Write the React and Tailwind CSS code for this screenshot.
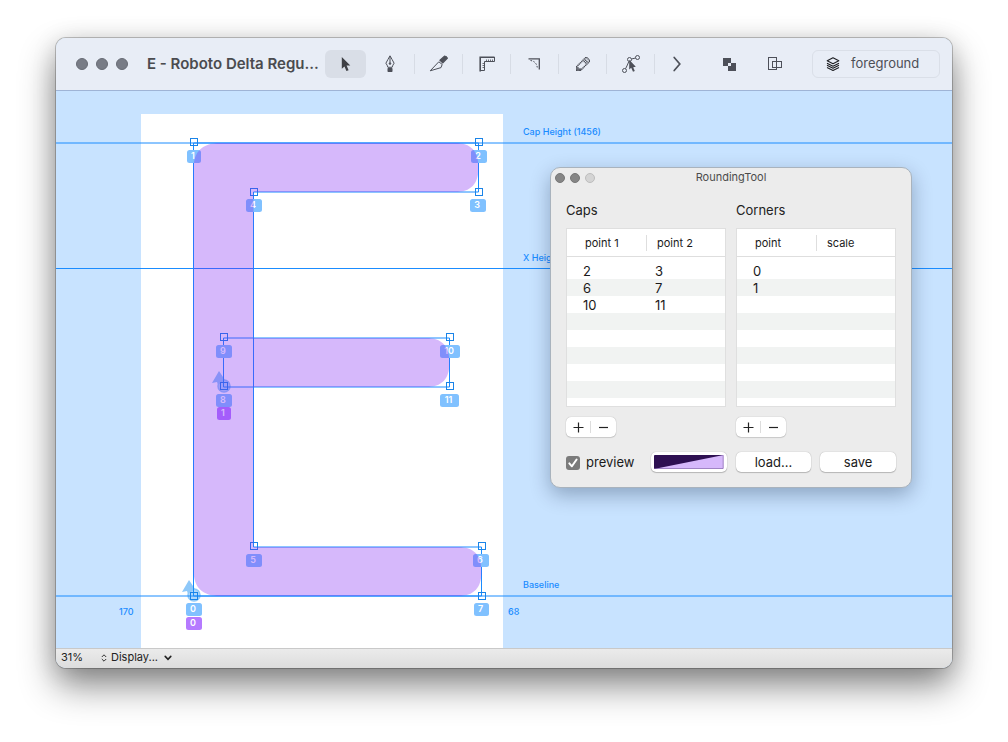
import React from "react";

const FONT = "font-['Inter','Liberation_Sans',sans-serif]";

const ICON = "#4d5059";

function ArrowIcon() {
  return (
    <svg width="12" height="16" viewBox="0 0 12 16">
      <path d="M1.8 1 L1.8 12.8 L4.5 10.4 L6.4 15.1 L8.6 14.2 L6.6 9.6 L10.3 9.4 Z" fill="#3f4045" />
    </svg>
  );
}

function PenIcon() {
  return (
    <svg width="12" height="18" viewBox="0 0 12 18" fill="none" stroke={ICON}>
      <path d="M6 0.8 C4.8 3.6 3 5.4 1.9 8.2 C2.8 9.6 3.6 10.8 3.9 12.3 H8.1 C8.4 10.8 9.2 9.6 10.1 8.2 C9 5.4 7.2 3.6 6 0.8 Z" />
      <path d="M6 1.5 V8" />
      <circle cx="6" cy="8.6" r="0.8" fill={ICON} />
      <rect x="3.5" y="13" width="5" height="4" rx="0.8" fill={ICON} stroke="none" />
    </svg>
  );
}

function KnifeIcon() {
  return (
    <svg width="20" height="18" viewBox="0 0 20 18" fill="none" stroke={ICON}>
      <path d="M1.2 15.8 L9.8 6.8 L13.2 9.4 L12 12.6 Z" strokeLinejoin="round" />
      <path d="M11 5.2 L15.6 1 Q17.6 1 18.4 3.2 L13.8 7.8 Z" fill={ICON} strokeWidth="1.2" />
    </svg>
  );
}

function RulerIcon() {
  return (
    <svg width="16" height="16" viewBox="0 0 16 16" fill="none" stroke={ICON}>
      <path d="M15.5 1.2 H1.2 V15.5" strokeWidth="1.6" />
      <path d="M15.5 1 V5.5 H5.5 V14.5 H1" />
      <path d="M7.5 3.5 V5.5 M9.5 3.5 V5.5 M11.5 3.5 V5.5 M13.5 3.5 V5.5 M3.5 7.5 H5.5 M3.5 9.5 H5.5 M3.5 11.5 H5.5" opacity="0.8" />
    </svg>
  );
}

function MeasureIcon() {
  return (
    <svg width="14" height="14" viewBox="0 0 14 14" fill="none" stroke={ICON}>
      <path d="M0.5 1.8 H11.3 V12.5" strokeWidth="1.3" />
      <path d="M2.5 3.5 C6.5 4 9 6.5 9.4 11.5" strokeDasharray="1.6 1.4" />
    </svg>
  );
}

const PENCIL_CELLS = [
  [7, 0], [8, 0], [6, 1], [9, 1], [5, 2], [7, 2], [10, 2], [4, 3], [8, 3], [10, 3], [3, 4], [6, 3], [7, 4], [9, 4],
  [2, 5], [8, 5], [1, 6], [7, 6], [0, 7], [6, 7], [0, 8], [1, 8], [5, 8], [0, 9], [1, 9], [2, 9], [3, 9], [4, 9],
  [0, 10], [1, 10], [2, 10], [3, 10],
];

function PixelPencilIcon() {
  return (
    <svg width="14" height="14" viewBox="0 0 11 11" fill={ICON}>
      {PENCIL_CELLS.map(([x, y]) => (
        <rect key={`${x}-${y}`} x={x} y={y} width="1.1" height="1.1" />
      ))}
    </svg>
  );
}

function NodeArrowIcon() {
  return (
    <svg width="20" height="20" viewBox="0 0 20 20" fill="none" stroke={ICON}>
      <circle cx="3.5" cy="16.5" r="2" />
      <circle cx="8.5" cy="5.5" r="2" />
      <circle cx="16.5" cy="3.5" r="2" />
      <path d="M4.6 14.6 Q6.5 11 7.8 7.6 M10.5 5 L14.5 4" />
      <path d="M8.2 5.8 V15.4 L10.2 13.8 L12 17.8 L13.8 17 L12.2 13.2 L14.8 12.8 Z" fill={ICON} stroke="none" />
    </svg>
  );
}

function ChevronIcon() {
  return (
    <svg width="10" height="16" viewBox="0 0 10 16" fill="none" stroke={ICON} strokeWidth="1.7" strokeLinecap="round">
      <path d="M2.2 1.5 L7.8 8 L2.2 14.5" />
    </svg>
  );
}

function UniteIcon() {
  return (
    <svg width="13" height="13" viewBox="0 0 13 13" fill={ICON}>
      <path d="M0 0 H8 V5 H5 V8 H0 Z" />
      <path d="M13 13 H5 V8 H8 V5 H13 Z" />
      <rect x="5" y="5" width="3" height="3" fill="#e8edf6" />
    </svg>
  );
}

function OverlapIcon() {
  return (
    <svg width="14" height="14" viewBox="0 0 14 14" fill="none" stroke={ICON}>
      <rect x="0.5" y="0.5" width="8" height="12" />
      <rect x="4.5" y="4.5" width="9" height="6" />
    </svg>
  );
}

function LayersIcon() {
  return (
    <svg width="14" height="14" viewBox="0 0 14 14" fill="none" stroke="#1f2024" strokeWidth="1.1" strokeLinejoin="round">
      <path d="M7 0.8 L12.8 3.8 L7 6.8 L1.2 3.8 Z" />
      <path d="M1 6.2 L7 9.2 L13 6.2 M1 8.3 L7 11.3 L13 8.3 M1 10.4 L7 13.4 L13 10.4" />
    </svg>
  );
}

const TOOLS = [
  ["Pen", PenIcon],
  ["Knife", KnifeIcon],
  ["Ruler", RulerIcon],
  ["Measure", MeasureIcon],
  ["Pixel", PixelPencilIcon],
  ["Edit nodes", NodeArrowIcon],
];

function Toolbar() {
  return (
    <header className="flex h-[53px] items-center border-b border-[#9fb4d6] bg-[#e8edf6] pl-5 pr-3">
      <div className="flex gap-2">
        {["Close", "Minimize", "Zoom"].map((name) => (
          <button key={name} aria-label={name} className="size-3 rounded-full border border-[#686c75] bg-[#787c86]" />
        ))}
      </div>
      <h1 className="ml-[19px] w-[178px] whitespace-nowrap text-[15px] font-semibold text-[#4a4b4f]">E - Roboto Delta Regu...</h1>
      <button aria-label="Select" className="flex h-7 w-[41px] items-center justify-center rounded-md bg-[#d9dee7]">
        <ArrowIcon />
      </button>
      {TOOLS.map(([name, Icon], i) => (
        <button
          key={name}
          aria-label={name}
          className={`flex h-5 items-center justify-center border-r border-[#d7dce5] ${i === 0 ? "w-[49px]" : "w-12"}`}
        >
          <Icon />
        </button>
      ))}
      <button aria-label="More tools" className="flex h-7 w-11 items-center justify-center">
        <ChevronIcon />
      </button>
      <div className="ml-auto flex items-center">
        <button aria-label="Unite" className="flex h-7 w-[46px] items-center justify-center">
          <UniteIcon />
        </button>
        <button aria-label="Overlap" className="flex h-7 w-[46px] items-center justify-center">
          <OverlapIcon />
        </button>
        <button className="ml-[14px] flex h-7 w-32 items-center gap-[11px] rounded-md border border-[#dadfe8] pl-[13px] text-[13px] text-[#4d4f57]">
          <LayersIcon />
          foreground
        </button>
      </div>
    </header>
  );
}

const MARKERS = [
  [194, 142], [479, 142], [479, 192], [254, 192], [224, 337], [450, 337],
  [224, 386], [450, 386], [254, 546], [482, 546], [194, 596], [482, 596],
];

const BADGES = [
  ["1", 187, 150, 14], ["2", 471, 150, 16], ["3", 470, 199, 16], ["4", 246, 199, 16],
  ["9", 216, 345, 16], ["10", 440, 345, 20], ["8", 216, 394, 16], ["11", 440, 394, 19],
  ["5", 246, 554, 16], ["6", 473, 554, 16], ["7", 474, 603, 15], ["0", 186, 603, 16],
];

const CORNER_BADGES = [["1", 217, 407, 14], ["0", 186, 617, 16]];

function Badge({ label, x, y, width, fill }) {
  return (
    <g>
      <rect x={x} y={y} width={width} height="13" rx="2.5" fill={fill} />
      <text x={x + width / 2 - 1} y={y + 9} textAnchor="middle" fontSize="9" fontWeight="600" fill="#ffffff">
        {label}
      </text>
    </g>
  );
}

function StartPoint({ x, y }) {
  return (
    <g fill="#1f92f5" opacity="0.5">
      <circle cx={x} cy={y - 1} r="6" fillOpacity="0.7" stroke="#1f92f5" strokeWidth="1.5" />
      <path d={`M${x - 5} ${y - 16} L${x + 1} ${y - 7} L${x - 6} ${y - 2} L${x - 7} ${y - 5} L${x - 12} ${y - 4} Z`} />
    </g>
  );
}

function GlyphCanvas() {
  return (
    <svg className={`block h-[557px] w-full ${FONT}`} role="img" aria-label="Outline of the letter E">
      <rect x="85" y="23" width="362" height="534" fill="#ffffff" />
      <g stroke="#1a8cff">
        <line x1="0" x2="100%" y1="52" y2="52" />
        <line x1="0" x2="100%" y1="177.5" y2="177.5" />
        <line x1="0" x2="100%" y1="505" y2="505" />
      </g>
      <g transform="translate(-56 -91)">
        <g fill="none" stroke="#1a8cff">
          <path d="M193.5 143 H478.5 V192 H253.5 V547 H481.5 V596 H193.5 Z" />
          <path d="M223.5 338 H449.5 V387 H223.5 Z" />
        </g>
        <StartPoint x={194} y={596} />
        <StartPoint x={224} y={387} />
        <g fill="none" stroke="#1a84e8">
          {MARKERS.map(([x, y]) => (
            <rect key={`${x}-${y}`} x={x - 3.5} y={y - 3.5} width="7" height="7" />
          ))}
        </g>
        {BADGES.map(([label, x, y, width]) => (
          <Badge key={label} label={label} x={x} y={y} width={width} fill="#80c1ff" />
        ))}
        {CORNER_BADGES.map(([label, x, y, width]) => (
          <Badge key={label} label={label} x={x} y={y} width={width} fill="#b57aff" />
        ))}
        <path
          fill="#8021f3"
          fillOpacity="0.32"
          d="M220 143 H455 C471 143 478.5 151 478.5 167.5 C478.5 184 471 192 455 192 H253.5 V338 H426 C442 338 449.5 346 449.5 362.5 C449.5 379 442 387 426 387 H253.5 V547 H458 C474 547 481.5 555 481.5 571.5 C481.5 588 474 596 458 596 H220 C203 596 193.5 588 193.5 570 V169 C193.5 151 203 143 220 143 Z"
        />
        <g fill="#1a8cff" fontSize="9" fontWeight="500">
          <text x="523" y="135">Cap Height (1456)</text>
          <text x="523" y="261">X Height (1082)</text>
          <text x="523" y="588">Baseline</text>
          <text x="119" y="615">170</text>
          <text x="508" y="615">68</text>
        </g>
      </g>
    </svg>
  );
}

function PointTable({ title, columns, rows }) {
  const blanks = Array.from({ length: 8 - rows.length }, () => ["", ""]);
  return (
    <section className="flex flex-1 flex-col items-start">
      <h2 className="text-[13px] leading-4 text-[#222222]">{title}</h2>
      <div className="mt-[10px] w-full border border-[#dfdfdf] bg-white pb-[8px]">
        <table aria-label={title} className="w-full table-fixed border-separate border-spacing-0 text-left text-[#1a1a1a]">
          <thead>
            <tr className="text-[11px]">
              <th scope="col" className="h-7 w-20 border-b border-[#dedede] p-0 pt-px font-normal">
                <span className="flex h-4 items-center border-r border-[#dedede] pl-[18px]">{columns[0]}</span>
              </th>
              <th scope="col" className="h-7 border-b border-[#dedede] p-0 pl-[10px] pt-px font-normal">
                {columns[1]}
              </th>
            </tr>
          </thead>
          <tbody className="text-[13px] leading-[15px]">
            <tr aria-hidden="true">
              <td colSpan="2" className="h-[5px] p-0" />
            </tr>
            {[...rows, ...blanks].map((row, i) => (
              <tr key={i} className={i % 2 ? "bg-[#f1f3f2]" : "bg-white"}>
                <td className="h-[17px] p-0 pl-4 pt-[2px]">{row[0]}</td>
                <td className="h-[17px] p-0 pl-2 pt-[2px]">{row[1]}</td>
              </tr>
            ))}
          </tbody>
        </table>
      </div>
      <div className="mt-[10px] flex h-5 items-center rounded-[5px] bg-white shadow-[0_0_1px_rgba(0,0,0,0.35),0_1px_1px_rgba(0,0,0,0.12)]">
        <button aria-label={`Add to ${title}`} className="flex h-3 w-[25px] items-center justify-center border-r border-[#dddddd]">
          <svg width="11" height="11" viewBox="0 0 11 11" stroke="#222222" strokeWidth="1.2">
            <path d="M5.5 0.5 V10.5 M0.5 5.5 H10.5" />
          </svg>
        </button>
        <button aria-label={`Remove from ${title}`} className="flex h-3 w-[25px] items-center justify-center">
          <svg width="9" height="11" viewBox="0 0 9 11" stroke="#222222" strokeWidth="1.2">
            <path d="M0 5.5 H9" />
          </svg>
        </button>
      </div>
    </section>
  );
}

const BUTTON =
  "h-5 rounded-[5px] bg-white text-[13px] leading-5 text-[#1a1a1a] shadow-[0_0_1px_rgba(0,0,0,0.35),0_1px_1px_rgba(0,0,0,0.2)]";

function RoundingTool() {
  return (
    <aside className="absolute left-[494px] top-[76px] w-[362px] rounded-[10px] border border-[#a9b3bd] bg-[#ececec] pb-[14px] shadow-[0_7px_20px_rgba(0,20,50,0.3)]">
      <div className="flex h-[19px] items-center pl-1">
        <div className="flex flex-1 gap-[5px]">
          <button aria-label="Close panel" className="size-[10px] rounded-full border border-[#777777] bg-[#868686]" />
          <button aria-label="Minimize panel" className="size-[10px] rounded-full border border-[#777777] bg-[#868686]" />
          <button aria-label="Zoom panel" disabled className="size-[10px] rounded-full border border-[#bdbdbd] bg-[#d4d4d4]" />
        </div>
        <span className="text-[11px] text-[#4c4c4c]">RoundingTool</span>
        <div className="flex-1 pr-1" />
      </div>
      <div className="mt-[15px] flex gap-[10px] px-[15px]">
        <PointTable title="Caps" columns={["point 1", "point 2"]} rows={[["2", "3"], ["6", "7"], ["10", "11"]]} />
        <PointTable title="Corners" columns={["point", "scale"]} rows={[["0", ""], ["1", ""]]} />
      </div>
      <div className="mt-[15px] flex items-center gap-[9px] px-[15px]">
        <label className="flex w-[76px] items-center gap-[6px] pt-px text-[13px] text-[#1a1a1a]">
          <span className="grid">
            <input
              type="checkbox"
              defaultChecked
              className="peer col-start-1 row-start-1 size-[14px] appearance-none rounded-[3px] bg-white checked:bg-[#7b7b7b]"
            />
            <svg className="pointer-events-none invisible col-start-1 row-start-1 peer-checked:visible" width="14" height="14" viewBox="0 0 14 14" fill="none" stroke="#ffffff" strokeWidth="2" strokeLinecap="round" strokeLinejoin="round">
              <path d="M3.3 7.4 L5.9 10.3 L10.6 3.5" />
            </svg>
          </span>
          preview
        </label>
        <div className="grid flex-1 grid-cols-3 gap-[9px]">
          <button aria-label="Preview colour" className={`${BUTTON} p-[3px]`}>
            <svg className="block h-[14px] w-full rounded-[1px]" viewBox="0 0 70 14" preserveAspectRatio="none">
              <rect width="70" height="14" fill="#d6b8fb" />
              <path d="M0 0 H70 L0 14 Z" fill="#2e1052" />
              <path d="M0 13.5 H69.5 V0" fill="none" stroke="#6b4f8e" strokeOpacity="0.5" />
            </svg>
          </button>
          <button className={BUTTON}>load...</button>
          <button className={BUTTON}>save</button>
        </div>
      </div>
    </aside>
  );
}

function StatusBar() {
  return (
    <footer className="flex h-5 items-center border-t border-[#c9c9c9] bg-linear-to-b from-[#ebebeb] to-[#dddddd] pb-[2px] pl-[5px] text-[11px] text-[#222222]">
      <span className="w-10">31%</span>
      <button aria-label="Change zoom" className="flex w-[10px] items-center">
        <svg width="6" height="8" viewBox="0 0 6 8" fill="none" stroke="#333333">
          <path d="M0.8 3 L3 0.8 L5.2 3 M0.8 5 L3 7.2 L5.2 5" />
        </svg>
      </button>
      <button className="flex items-center gap-[6px]">
        Display...
        <svg width="8" height="6" viewBox="0 0 8 6" fill="none" stroke="#222222" strokeWidth="1.6" strokeLinecap="round">
          <path d="M1.2 1.4 L4 4.4 L6.8 1.4" />
        </svg>
      </button>
    </footer>
  );
}

export default function App() {
  return (
    <div className={`min-h-screen overflow-hidden bg-white px-14 pb-[74px] pt-[38px] ${FONT}`}>
      <div className="rounded-[10px] shadow-[0_0_0_1px_rgba(0,0,0,0.22),0_18px_36px_rgba(0,0,0,0.45),0_4px_24px_rgba(0,0,0,0.15)]">
        <div className="overflow-hidden rounded-[10px] bg-[#c8e3ff]">
          <Toolbar />
          <main className="relative">
            <GlyphCanvas />
            <RoundingTool />
          </main>
          <StatusBar />
        </div>
      </div>
    </div>
  );
}
